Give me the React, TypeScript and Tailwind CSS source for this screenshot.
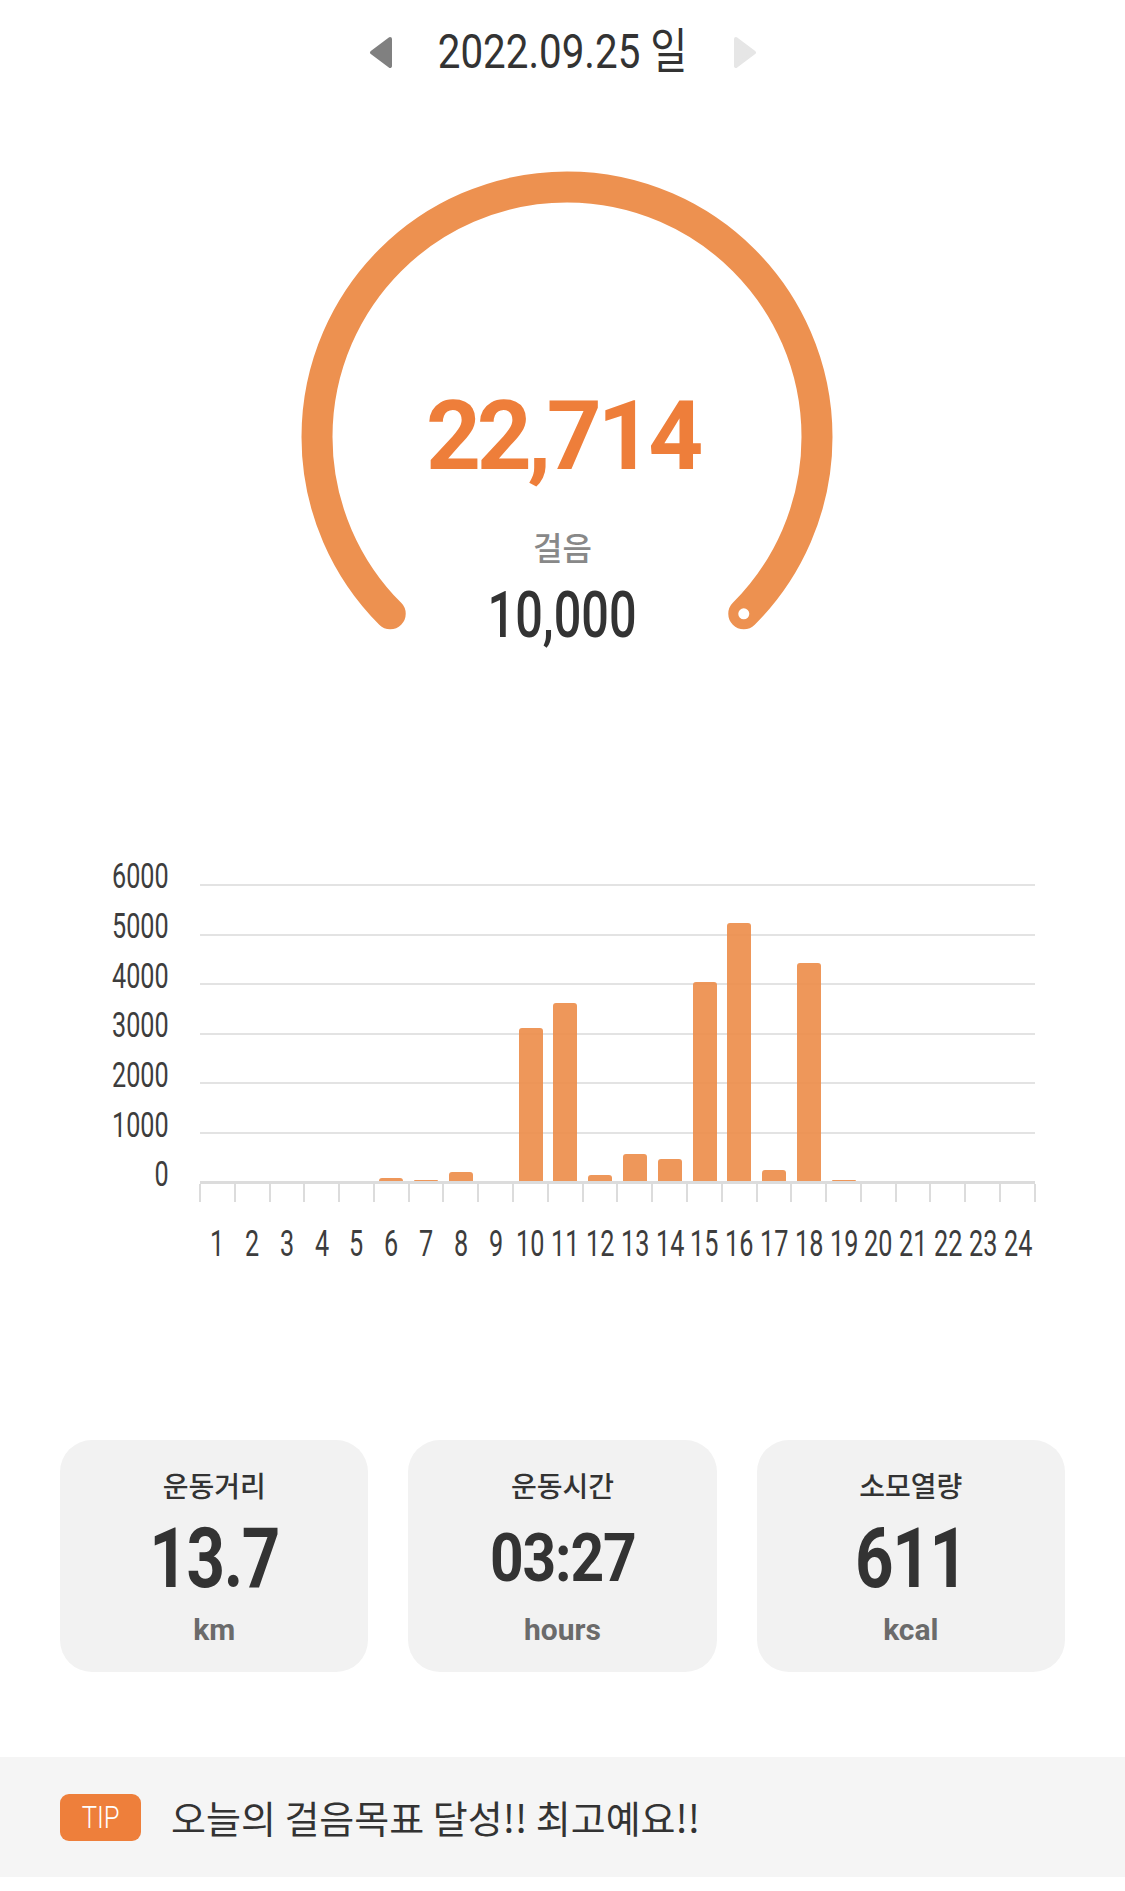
import React from 'react';

// hourly step counts (1시 ~ 24시)
const hourly = [0, 0, 0, 0, 0, 60, 15, 180, 0, 3085, 3600, 121, 538, 437, 4030, 5222, 216, 4408, 20, 0, 0, 0, 0, 0];
const MAX = 6000;
const PLOT_H = 297;
const yLabels = ['6000', '5000', '4000', '3000', '2000', '1000', '0'];

const stats = [
  { title: '운동거리', value: '13.7', unit: 'km', cls: 'h-[84px] text-[84px] scale-x-[0.8]' },
  { title: '운동시간', value: '03:27', unit: 'hours', cls: 'h-[84px] text-[66px] scale-x-[0.89]' },
  { title: '소모열량', value: '611', unit: 'kcal', cls: 'h-[84px] text-[84px] scale-x-[0.8]' },
];

function Triangle({ dir, color }: { dir: 'left' | 'right'; color: string }) {
  const pts = dir === 'left' ? '21,3 3,16.5 21,30' : '3,3 21,16.5 3,30';
  return (
    <svg width="24" height="33" viewBox="0 0 24 33">
      <polygon points={pts} fill={color} stroke={color} strokeWidth="4" strokeLinejoin="round" />
    </svg>
  );
}

function Gauge() {
  const cx = 284;
  const cy = 317;
  const r = 250;
  const d = r * Math.SQRT1_2;
  const sx = cx - d;
  const ex = cx + d;
  const ey = cy + d;
  return (
    <div className="relative mx-auto mt-[16px] h-[540px] w-[560px]">
      <svg className="absolute inset-0" width="560" height="540" viewBox="0 0 560 540">
        <path
          d={`M ${sx} ${ey} A ${r} ${r} 0 1 1 ${ex} ${ey}`}
          fill="none"
          stroke="#ED9150"
          strokeWidth="31"
          strokeLinecap="round"
        />
        <circle cx={ex} cy={ey} r="5.5" fill="#ffffff" />
      </svg>
      <div className="absolute inset-0 flex flex-col items-center pt-[268px]">
        <div className="h-[96px] font-['Roboto',sans-serif] text-[96px] font-bold leading-none tracking-[-0.045em] text-[#EE7E3A]">
          22,714
        </div>
        <div className="mt-[46px] h-[32px] font-['Noto_Sans_CJK_KR',sans-serif] text-[32px] font-medium leading-none text-[#888888]">
          걸음
        </div>
        <div className="mt-[22px] h-[64px] origin-center scale-x-[0.76] font-['Roboto',sans-serif] text-[64px] font-medium leading-none text-[#333333]">
          10,000
        </div>
      </div>
    </div>
  );
}

function Chart() {
  return (
    <div className="mt-[192px] flex items-start gap-[31px]">
      <div className="flex w-[169px] flex-col">
        {yLabels.map((l) => (
          <div key={l} className="flex h-[49.67px] items-center justify-end">
            <span className="inline-block origin-right scale-x-[0.72] font-['Roboto',sans-serif] text-[35px] leading-none text-[#3d3d3d]">
              {l}
            </span>
          </div>
        ))}
      </div>
      <div className="mt-[32px] flex w-[835px] flex-col">
        <div className="relative h-[300px]">
          <div className="flex h-full flex-col justify-between">
            {yLabels.slice(0, 6).map((l) => (
              <div key={l} className="h-[2px] bg-[#e3e3e3]" />
            ))}
            <div className="h-[3px] bg-[#dcdcdc]" />
          </div>
          <div className="absolute inset-x-0 top-0 bottom-[3px] flex items-end">
            {hourly.map((v, i) => (
              <div key={i} className="flex min-w-0 flex-1 justify-center">
                {v > 0 && (
                  <div
                    className="w-[24px] rounded-t-[3px] bg-[#EC8C48] opacity-90"
                    style={{ height: Math.max(1, (v / MAX) * PLOT_H) }}
                  />
                )}
              </div>
            ))}
          </div>
        </div>
        <div className="-ml-px flex w-[837px] justify-between">
          {Array.from({ length: 25 }).map((_, i) => (
            <div key={i} className="h-[18px] w-[2px] bg-[#dcdcdc]" />
          ))}
        </div>
        <div className="mt-[24px] flex h-[36px]">
          {hourly.map((_, i) => (
            <div key={i} className="flex min-w-0 flex-1 justify-center">
              <span className="inline-block shrink-0 scale-x-[0.7] whitespace-nowrap font-['Roboto',sans-serif] text-[36px] leading-none text-[#3d3d3d]">
                {i + 1}
              </span>
            </div>
          ))}
        </div>
      </div>
    </div>
  );
}

export default function App() {
  return (
    <div className="flex min-h-[1891px] w-[1125px] flex-col bg-white">
      {/* 날짜 헤더 */}
      <div className="flex h-[104px] items-center justify-center gap-[44px]">
        <Triangle dir="left" color="#808080" />
        <div className="flex w-[252px] justify-center">
          <span className="inline-block scale-x-[0.84] whitespace-nowrap font-['Roboto','Noto_Sans_CJK_KR',sans-serif] text-[48px] leading-none text-[#333333]">
            2022.09.25 일
          </span>
        </div>
        <Triangle dir="right" color="#e6e6e6" />
      </div>

      <Gauge />

      <Chart />

      {/* 운동 요약 카드 */}
      <div className="mt-[178px] grid grid-cols-3 gap-[40px] px-[60px]">
        {stats.map((s) => (
          <div key={s.title} className="flex h-[232px] flex-col items-center rounded-[32px] bg-[#f2f2f2] pt-[31px]">
            <div className="h-[28px] font-['Noto_Sans_CJK_KR',sans-serif] text-[28px] font-medium leading-none text-[#333333]">
              {s.title}
            </div>
            <div
              className={`mt-[18px] flex items-center font-['Roboto',sans-serif] font-bold leading-none tracking-[-0.02em] text-[#333333] ${s.cls}`}
            >
              {s.value}
            </div>
            <div className="mt-[14px] h-[28px] font-['Roboto',sans-serif] text-[30px] font-bold leading-none text-[#6b6b6b]">
              {s.unit}
            </div>
          </div>
        ))}
      </div>

      {/* TIP */}
      <div className="mt-[85px] flex h-[120px] items-center gap-[30px] bg-[#f5f5f5] pl-[60px]">
        <div className="flex h-[47px] w-[81px] items-center justify-center rounded-[9px] bg-[#EE7F3B]">
          <span className="inline-block scale-x-[0.8] font-['Roboto',sans-serif] text-[32px] font-light leading-none text-white">
            TIP
          </span>
        </div>
        <div className="font-['Noto_Sans_CJK_KR',sans-serif] text-[38px] leading-none text-[#333333]">
          오늘의 걸음목표 달성!! 최고예요!!
        </div>
      </div>
    </div>
  );
}
